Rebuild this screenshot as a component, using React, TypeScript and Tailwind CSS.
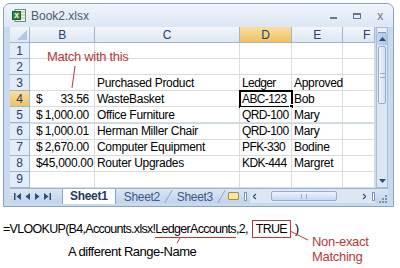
import { ChevronLeft, ChevronRight } from 'lucide-react';

const rows = [
  { n: 1, b: '', c: '', d: '', e: '' },
  { n: 2, b: '', c: '', d: '', e: '' },
  { n: 3, b: '', c: 'Purchased Product', d: 'Ledger', e: 'Approved' },
  { n: 4, b: '33.56', c: 'WasteBasket', d: 'ABC-123', e: 'Bob' },
  { n: 5, b: '1,000.00', c: 'Office Furniture', d: 'QRD-100', e: 'Mary' },
  { n: 6, b: '1,000.01', c: 'Herman Miller Chair', d: 'QRD-100', e: 'Mary' },
  { n: 7, b: '2,670.00', c: 'Computer Equipment', d: 'PFK-330', e: 'Bodine' },
  { n: 8, b: '$45,000.00', c: 'Router Upgrades', d: 'KDK-444', e: 'Margret' },
  { n: 9, b: '', c: '', d: '', e: '' },
];

function ExcelIcon() {
  return (
    <svg width="14" height="13" viewBox="0 0 14 13">
      <rect x="3" y="0.5" width="10.5" height="12" fill="#f4f7f2" stroke="#6f8f6a" />
      <line x1="6" y1="3" x2="13" y2="3" stroke="#9fb89a" />
      <line x1="6" y1="6" x2="13" y2="6" stroke="#9fb89a" />
      <line x1="6" y1="9" x2="13" y2="9" stroke="#9fb89a" />
      <rect x="0.5" y="2.5" width="8" height="8" fill="#2f8a3b" stroke="#1d5e26" />
      <text x="4.5" y="9" fontSize="7" fontWeight="bold" fill="white" textAnchor="middle" fontFamily="Liberation Sans">X</text>
    </svg>
  );
}

function Cell({ children, className = '' }: { children?: React.ReactNode; className?: string }) {
  return (
    <div className={`h-[16px] border-r border-b border-[#dadcdd] bg-white flex items-center text-[12px] leading-none text-black whitespace-nowrap ${className}`}>
      {children}
    </div>
  );
}

export default function App() {
  return (
    <div className="w-[400px] h-[268px] bg-white relative overflow-hidden font-['Liberation_Sans',sans-serif] tracking-[-0.3px]">
      {/* window */}
      <div className="ml-[3px] mt-[3px] w-[391px] h-[204px] rounded-t-[7px] border border-[#8aa2c2] bg-[#c9d9ee] flex flex-col">
        {/* title bar */}
        <div className="h-[23px] flex items-center pl-[8px] pr-[10px] bg-gradient-to-b from-[#eef4fb] to-[#dce7f4] rounded-t-[6px]">
          <ExcelIcon />
          <span className="ml-[5px] text-[12px] text-[#4f5b6d] tracking-normal">Book2.xlsx</span>
          <div className="ml-auto flex items-center gap-[16px] text-[#6a7585]">
            <div className="w-[7px] h-[2px] bg-[#6a7585] mt-[5px]" />
            <div className="w-[8px] h-[6px] border border-[#6a7585] border-t-2" />
            <span className="text-[12px] leading-none">x</span>
          </div>
        </div>
        {/* sheet body */}
        <div className="flex pl-[6px] pr-[5px]">
          <div className="grid grid-cols-[20px_65px_145px_52px_51px_32px]">
            {/* header row */}
            <div className="h-[16px] border-r border-b border-[#9eb6ce] bg-gradient-to-b from-[#f3f6fb] to-[#dde6f2] flex items-end justify-end p-[2px]">
              <svg width="10" height="10" viewBox="0 0 10 10"><polygon points="10,0 10,10 0,10" fill="#b5c7dd" /></svg>
            </div>
            {['B', 'C', 'D', 'E', 'F'].map((l) => (
              <div
                key={l}
                className={`h-[16px] border-r border-b border-[#9eb6ce] flex items-center text-[12px] text-[#27416a] ${l === 'F' ? 'justify-end pr-[4px]' : 'justify-center'} ${l === 'D' ? 'bg-gradient-to-b from-[#f9dea0] to-[#f1c15f]' : 'bg-gradient-to-b from-[#f3f6fb] to-[#dde6f2]'}`}
              >
                {l}
              </div>
            ))}
            {rows.map((r) => (
              <>
                <div
                  key={`h${r.n}`}
                  className={`h-[16px] border-r border-b border-[#9eb6ce] flex items-center justify-center text-[12px] text-[#27416a] ${r.n === 4 ? 'bg-gradient-to-b from-[#f9dea0] to-[#f1c15f]' : 'bg-[#e4ecf7]'}`}
                >
                  {r.n}
                </div>
                <Cell key={`b${r.n}`} className="justify-between pl-[6px] pr-[5px]">
                  {r.b && !r.b.startsWith('$') ? <span>$</span> : <span />}
                  <span>{r.b}</span>
                </Cell>
                <Cell key={`c${r.n}`} className="pl-[2px]">{r.c}</Cell>
                <Cell key={`d${r.n}`} className={`pl-[2px] relative tracking-[-0.6px] ${r.n === 4 ? 'outline-2 outline-black -outline-offset-1' : ''}`}>
                  {r.d}
                  {r.n === 4 && <div className="absolute right-[-3px] bottom-[-3px] w-[5px] h-[5px] bg-black border border-white" />}
                </Cell>
                <Cell key={`e${r.n}`} className="pl-[2px]">{r.e}</Cell>
                <Cell key={`f${r.n}`} />
              </>
            ))}
          </div>
          {/* vertical scrollbar */}
          <div className="w-[12px] h-[161px] ml-[1px] bg-[#dde7f3] border border-[#a9bdd6] flex flex-col">
            <div className="h-[5px] border-b border-[#7f9cc0] bg-[#e9f0f8] mx-[1px]" />
            <div className="h-[12px] flex items-center justify-center bg-gradient-to-r from-[#c4d5eb] to-[#adc4e2]">
              <svg width="7" height="4" viewBox="0 0 7 4"><polygon points="3.5,0 7,4 0,4" fill="#2c4e7c" /></svg>
            </div>
            <div className="h-[58px] mx-[1px] mt-[1px] rounded-[2px] border border-[#95aed0] bg-gradient-to-r from-[#eef3fa] to-[#d3e0f0] flex items-center justify-center">
              <div className="w-[5px] h-[5px] border-y border-[#98acc6]" />
            </div>
            <div className="flex-1" />
            <div className="h-[12px] flex items-center justify-center">
              <svg width="7" height="4" viewBox="0 0 7 4"><polygon points="0,0 7,0 3.5,4" fill="#2c4e7c" /></svg>
            </div>
          </div>
        </div>
        {/* sheet tabs */}
        <div className="h-[15px] ml-[6px] mr-[5px] flex items-center bg-gradient-to-b from-[#dbe6f4] to-[#c2d3ea] border-t border-[#9eb6ce]">
          <div className="flex items-center gap-[3px] pl-[4px] w-[48px] text-[#2c4e7c]">
            <svg width="8" height="7" viewBox="0 0 8 7"><rect x="0" y="0" width="1.5" height="7" fill="currentColor" /><polygon points="7,0 7,7 2.5,3.5" fill="currentColor" /></svg>
            <svg width="6" height="7" viewBox="0 0 6 7"><polygon points="5,0 5,7 0.5,3.5" fill="currentColor" /></svg>
            <svg width="6" height="7" viewBox="0 0 6 7"><polygon points="1,0 1,7 5.5,3.5" fill="currentColor" /></svg>
            <svg width="8" height="7" viewBox="0 0 8 7"><polygon points="1,0 1,7 5.5,3.5" fill="currentColor" /><rect x="6.5" y="0" width="1.5" height="7" fill="currentColor" /></svg>
          </div>
          <div className="h-[15px] ml-[4px] px-[7px] bg-white border-x border-[#8aa2c2] flex items-center text-[12px] font-bold text-[#1f3a60]">Sheet1</div>
          <div className="h-[13px] px-[8px] flex items-center text-[12px] text-[#3d5a84] border-r border-[#8aa2c2] skew-x-[-30deg]"><span className="skew-x-[30deg]">Sheet2</span></div>
          <div className="h-[13px] px-[8px] flex items-center text-[12px] text-[#3d5a84] border-r border-[#8aa2c2] skew-x-[-30deg]"><span className="skew-x-[30deg]">Sheet3</span></div>
          <div className="ml-[6px] w-[11px] h-[8px] rounded-[1px] border border-[#b58a2d] bg-[#f7e6a8]" />
          <div className="ml-[5px] w-[3px] h-[9px] border border-[#7f9cc0] bg-white" />
          <div className="ml-[3px] flex-1 h-[13px] flex items-center bg-[#dde7f3]">
            <ChevronLeft size={9} strokeWidth={3} className="text-[#2c4e7c]" />
            <div className="ml-[12px] w-[66px] h-[10px] rounded-[2px] border border-[#95aed0] bg-gradient-to-b from-[#eef3fa] to-[#c8d8ee] flex items-center justify-center">
              <div className="w-[6px] h-[5px] border-x border-[#98acc6]" />
            </div>
            <div className="flex-1" />
            <ChevronRight size={9} strokeWidth={3} className="text-[#2c4e7c]" />
            <div className="ml-[3px] w-[3px] h-[9px] border border-[#7f9cc0] bg-white" />
          </div>
          <div className="w-[13px] h-[13px] flex items-end justify-end pr-[1px]">
            <svg width="8" height="8" viewBox="0 0 8 8"><g fill="#7f93ad"><rect x="6" y="0" width="2" height="2" /><rect x="3" y="3" width="2" height="2" /><rect x="6" y="3" width="2" height="2" /><rect x="0" y="6" width="2" height="2" /><rect x="3" y="6" width="2" height="2" /><rect x="6" y="6" width="2" height="2" /></g></svg>
          </div>
        </div>
      </div>

      {/* formula */}
      <div className="mt-[13px] ml-[3px] flex items-center text-[12.5px] text-black tracking-[-0.7px] h-[18px]">
        <span>=VLOOKUP(B4,Accounts.xlsx!</span>
        <span className="border-b border-[#b33a3a] leading-[16px]">LedgerAccounts</span>
        <span>,2,</span>
        <span className="ml-[4px] px-[3px] border border-[#b33a3a] leading-[16px]">TRUE</span>
        <span className="ml-[4px]">)</span>
      </div>
      <div className="ml-[68px] mt-[4px] text-[13px] text-black tracking-[-0.5px]">A different Range-Name</div>

      {/* annotations */}
      <div className="absolute left-[47px] top-[50px] text-[13px] text-[#b23a3e] tracking-[-0.3px] leading-none">Match with this</div>
      <div className="absolute left-[312px] top-[234px] text-[13px] text-[#b23a3e] tracking-[-0.3px] leading-[15px]">
        Non-exact<br />Matching
      </div>
      <svg className="absolute left-0 top-0 pointer-events-none" width="400" height="268">
        <line x1="75" y1="66" x2="72" y2="88" stroke="#b23a3e" strokeWidth="1" />
        <line x1="180" y1="238" x2="177" y2="243" stroke="#b23a3e" strokeWidth="1" />
        <line x1="290" y1="231" x2="308" y2="240" stroke="#b23a3e" strokeWidth="1" />
      </svg>
    </div>
  );
}
